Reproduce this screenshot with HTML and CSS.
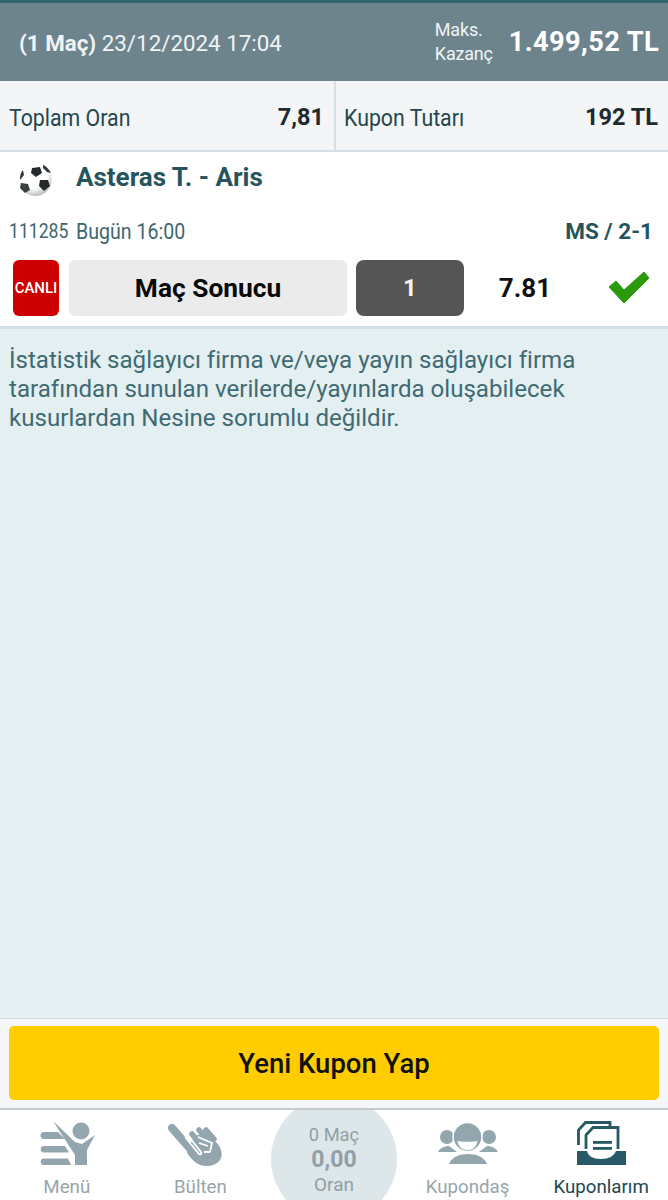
FILE: index.html
```html
<!DOCTYPE html>
<html lang="tr">
<head>
<meta charset="utf-8">
<title>Kuponlarım</title>
<link rel="stylesheet" href="styles.css">
</head>
<body>
<div class="app">
  <header class="head">
    <div class="head-date"><b>(1 Maç)</b> 23/12/2024 17:04</div>
    <div class="head-win">
      <div class="win-label">Maks.<br>Kazanç</div>
      <div class="win-value">1.499,52 TL</div>
    </div>
  </header>
  <section class="stats">
    <div class="stat stat-left"><span class="stat-label">Toplam Oran</span><b class="stat-value">7,81</b></div>
    <div class="stat stat-right"><span class="stat-label">Kupon Tutarı</span><b class="stat-value">192 TL</b></div>
  </section>
  <section class="match">
    <div class="match-title">
      <svg class="ball" viewBox="0 0 36 36" width="36" height="36">
        <defs><radialGradient id="bg" cx="0.42" cy="0.32" r="0.72"><stop offset="0.62" stop-color="#fff"/><stop offset="1" stop-color="#aeb3b3"/></radialGradient></defs>
        <circle cx="18.500" cy="18" r="16" fill="url(#bg)"/>
        <path d="M15 6l8-1 2 6-6 4-5-4z" fill="#25292b"/>
        <path d="M23 18l8 0 2 6-6 5-5-5z" fill="#25292b"/>
        <path d="M4 21l7 1 2 6-5 3-5-5z" fill="#3a3f41"/>
        <path d="M6 8l1 5-4 5c-.5-4 1-8 3-10z" fill="#33383a"/>
        <path d="M26 3c3 1 6 4 8 8l-4-1-4-4z" fill="#33383a"/>
      </svg>
      <h1 class="teams">Asteras T. - Aris</h1>
    </div>
    <div class="match-meta">
      <span class="code">111285</span>
      <span class="when">Bugün 16:00</span>
      <b class="score">MS / 2-1</b>
    </div>
    <div class="pick">
      <div class="live">CANLI</div>
      <div class="market">Maç Sonucu</div>
      <div class="choice">1</div>
      <div class="odd">7.81</div>
      <svg class="tick" viewBox="0 0 42 32" width="42" height="32"><path d="M1 15l7-6 8 9L36 0l5 6-25 25z" fill="#2a9a0c" stroke="#2a9a0c" stroke-linejoin="round"/></svg>
    </div>
  </section>
  <main class="info">
    <p>İstatistik sağlayıcı firma ve/veya yayın sağlayıcı firma tarafından sunulan verilerde/yayınlarda oluşabilecek kusurlardan Nesine sorumlu değildir.</p>
  </main>
  <div class="action"><button class="new">Yeni Kupon Yap</button></div>
  <nav class="nav">
    <div class="tab">
      <svg viewBox="0 0 56 46" width="56" height="46" class="ico">
        <circle cx="42" cy="10" r="8.500" fill="#93a6ae"/>
        <path d="M14 0l22 21 7 2 13-9-8 15v15H36V34z" fill="#93a6ae"/>
        <path d="M5 11h14l7 7H5a3.500 3.500 0 0 1 0-7z" fill="#93a6ae"/>
        <path d="M5 25h21l4 6.500H5a3.250 3.250 0 0 1 0-6.500z" fill="#93a6ae"/>
        <path d="M5 37.500h24l3 6.500H5a3.250 3.250 0 0 1 0-6.500z" fill="#93a6ae"/>
      </svg>
      <span>Menü</span>
    </div>
    <div class="tab">
      <svg viewBox="0 0 64 46" width="64" height="46" class="ico">
        <path d="M4 7l21 24" stroke="#93a6ae" stroke-width="8" stroke-linecap="round"/>
        <path d="M22 24l4-9 7-2 15 8c6 6 7 13 4 18-3 4-8 6-14 6-8 0-14-6-19-13z" fill="#93a6ae"/>
        <path d="M24 13l9 11M31 9l9 10M38 9l8 9" stroke="#93a6ae" stroke-width="5.500" stroke-linecap="round"/>
        <path d="M17 16l14 17c2 1 3 0 2-2L21 16M30 16l14 6-2 9M31 22l9 3M36 31l6 0" stroke="#fff" stroke-width="1.800" fill="none"/>
      </svg>
      <span>Bülten</span>
    </div>
    <div class="tab tab-mid">
      <div class="circle">
        <span class="c-top">0 Maç</span>
        <b class="c-num">0,00</b>
        <span class="c-bot">Oran</span>
      </div>
    </div>
    <div class="tab">
      <svg viewBox="0 0 62 46" width="62" height="46" class="ico">
        <circle cx="10" cy="16" r="7" fill="#93a6ae"/><circle cx="52" cy="16" r="7" fill="#93a6ae"/>
        <path d="M1 31c2-4 7-6 11-6l8 6zM61 31c-2-4-7-6-11-6l-8 6z" fill="#93a6ae"/>
        <circle cx="30.500" cy="16" r="14.500" fill="#93a6ae" stroke="#fff" stroke-width="1.500"/>
        <path d="M20.500 20c3 1 17 1 20 0-1 6-5 9-10 9s-9-3-10-9z" fill="#fff"/>
        <path d="M12 43c3-7 10-10 19-10s16 3 19 10z" fill="#93a6ae"/>
      </svg>
      <span>Kupondaş</span>
    </div>
    <div class="tab tab-on">
      <svg viewBox="0 0 50 46" width="50" height="46" class="ico">
        <path d="M2.500 24V9l7-7.500H34V7" fill="none" stroke="#255a66" stroke-width="2.800"/>
        <path d="M10 28V14l7-7.500h25V28" fill="none" stroke="#255a66" stroke-width="2.800"/>
        <rect x="17" y="20" width="19" height="2.800" fill="#255a66"/><rect x="17" y="26" width="19" height="2.800" fill="#255a66"/>
        <path d="M1 30h10c1 5 6 8 14 8s13-3 15-8h10v14H1z" fill="#255a66"/>
      </svg>
      <span>Kuponlarım</span>
    </div>
  </nav>
</div>
</body>
</html>
```
FILE: styles.css
```css
* { box-sizing: border-box; }
html, body { margin: 0; padding: 0; }
body { font-family: Roboto, "Noto Sans", sans-serif; background: #fff; }
.app { width: 668px; height: 1200px; display: flex; flex-direction: column; overflow: hidden; }
.head { height: 81px; flex: none; background: #6d848d; border-top: 3px solid #2d6470; display: flex; align-items: center; justify-content: space-between; padding: 2px 9px 0 19px; color: #fff; }
.head-date { font-size: 22.350px; color: #f0f4f5; }
.head-date b { font-weight: 700; }
.head-win { display: flex; align-items: center; gap: 16px; margin-top: -2px; }
.win-label { font-size: 18px; line-height: 24px; letter-spacing: -0.2px; color: #f0f4f5; }
.win-value { font-size: 27.200px; font-weight: 700; letter-spacing: 0.4px; }
.stats { height: 71px; flex: none; background: #f4f5f6; border-bottom: 2px solid #d5dfe5; display: flex; }
.stat { width: 50%; display: flex; align-items: center; justify-content: space-between; padding-top: 3px; }
.stat-left { padding-left: 9px; padding-right: 10px; }
.stat-right { padding-left: 8px; padding-right: 10px; border-left: 2px solid #d5dfe5; }
.stat-label { display: inline-block; font-size: 24.500px; color: #23474f; transform: scaleX(0.87); transform-origin: left center; white-space: nowrap; }
.stat-value { font-size: 23.500px; color: #1e2a2e; }
.match { height: 177px; flex: none; background: #fff; border-bottom: 3px solid #d2e0e6; padding: 0 0 0 9px; display: flex; flex-direction: column; }
.match-title { height: 52px; display: flex; align-items: center; gap: 23px; padding-left: 8px; }
.ball { flex: none; margin-top: 4px; }
.teams { margin: 0 0 2px; font-size: 26px; font-weight: 700; color: #25545c; }
.match-meta { height: 56px; display: flex; align-items: center; padding: 0 15px 2px 0; color: #3d6670; }
.code { display: inline-block; width: 67px; font-size: 20px; transform: scaleX(0.88); transform-origin: left center; }
.when { display: inline-block; font-size: 21.500px; transform: scaleX(0.91); transform-origin: left center; white-space: nowrap; }
.score { margin-left: auto; font-size: 22.500px; color: #25545c; }
.pick { height: 56px; display: flex; align-items: center; padding-left: 4px; }
.live { width: 46px; height: 56px; background: #cc0000; border-radius: 6px; color: #fff; font-size: 15px; font-weight: 500; display: flex; align-items: center; justify-content: center; }
.market { width: 278px; height: 56px; margin-left: 10px; background: #ebebeb; border-radius: 6px; display: flex; align-items: center; justify-content: center; font-size: 26.300px; font-weight: 700; color: #0a0a0a; }
.choice { width: 108px; height: 56px; margin-left: 9px; background: #555; border-radius: 8px; display: flex; align-items: center; justify-content: center; color: #f2f2f2; font-size: 24px; font-weight: 700; }
.odd { width: 122px; text-align: center; font-size: 26px; font-weight: 700; color: #111; }
.tick { flex: none; margin-left: 22px; }
.info { flex: 1; background: #e4eff1; padding: 17px 9px 0; }
.info p { margin: 0; font-size: 24.100px; line-height: 29px; color: #3f6a73; }
.action { height: 92px; flex: none; background: #f5f6f7; border-top: 1px solid #d2dadf; border-bottom: 2px solid #c5c9cc; padding: 7px 9px 0; }
.new { display: block; width: 100%; height: 74px; border: 0; background: #ffcc00; border-radius: 5px; font-family: Roboto, sans-serif; font-size: 27.500px; font-weight: 500; color: #111; padding: 0; }
.nav { height: 90px; flex: none; background: #fff; display: flex; overflow: hidden; }
.tab { flex: 1 1 0; display: flex; flex-direction: column; align-items: center; padding-top: 11px; font-size: 18.700px; color: #97a5ab; }
.ico { flex: none; margin-bottom: 9px; }
.tab-on { color: #22474f; }
.tab-mid { padding-top: 0; position: relative; }
.circle { position: absolute; top: -14px; left: 50%; margin-left: -63px; width: 126px; height: 126px; border-radius: 50%; background: #dde6e9; display: flex; flex-direction: column; align-items: center; padding-top: 27px; color: #8fa0a8; }
.c-top { font-size: 18.300px; line-height: 24px; }
.c-num { font-size: 23px; line-height: 26px; }
.c-bot { font-size: 19px; line-height: 24px; }
```
